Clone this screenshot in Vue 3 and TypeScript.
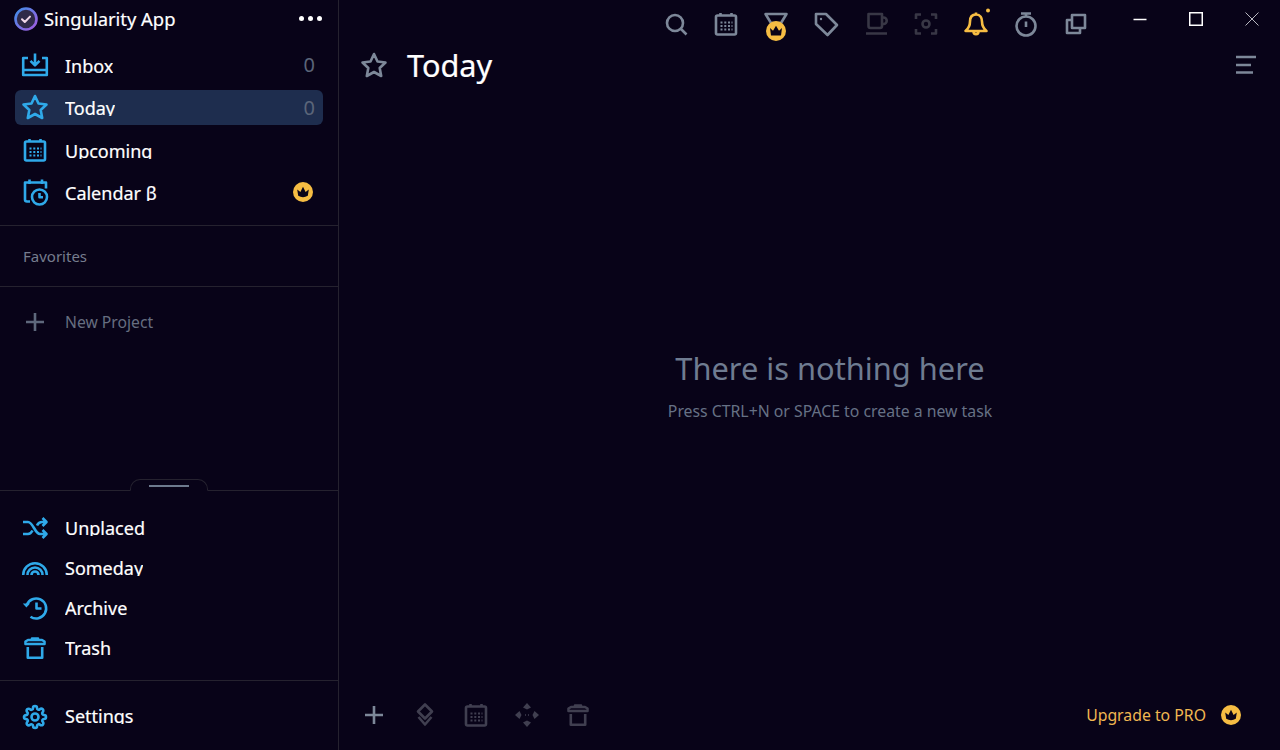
<template>
  <div class="app">
    <aside class="sidebar">
      <header class="brand">
        <svg class="logo" viewBox="0 0 24 24">
          <defs>
            <linearGradient id="ring" x1="0" y1="0" x2="1" y2="1">
              <stop offset="0" stop-color="#3f8ee8" />
              <stop offset="1" stop-color="#a45be0" />
            </linearGradient>
          </defs>
          <circle cx="12" cy="12" r="10.500" fill="#2f2a48" stroke="url(#ring)" stroke-width="2.600" />
          <path d="M8 12.200l2.800 2.800L16 9.600" fill="none" stroke="#f0d8e8" stroke-width="2" stroke-linecap="round" stroke-linejoin="round" />
        </svg>
        <span class="brand-name">Singularity App</span>
        <span class="dots"><i></i><i></i><i></i></span>
      </header>

      <nav class="nav main-nav">
        <a v-for="item in mainNav" :key="item.label" class="nav-row" :class="{ active: item.active }">
          <svg class="ic blue" viewBox="0 0 26 26" v-html="item.icon"></svg>
          <span class="label">{{ item.label }}</span>
          <span v-if="item.count !== undefined" class="count">{{ item.count }}</span>
          <svg v-if="item.pro" class="crown" viewBox="0 0 20 20" v-html="crown"></svg>
        </a>
      </nav>

      <div class="favorites">Favorites</div>

      <div class="new-project">
        <svg class="ic plus" viewBox="0 0 26 26" v-html="icons.plus"></svg>
        <span>New Project</span>
      </div>

      <div class="spacer"></div>

      <div class="handle-line">
        <div class="handle"><i></i></div>
      </div>

      <nav class="nav lower-nav">
        <a v-for="item in lowerNav" :key="item.label" class="nav-row low">
          <svg class="ic blue" viewBox="0 0 26 26" v-html="item.icon"></svg>
          <span class="label">{{ item.label }}</span>
        </a>
      </nav>

      <div class="settings">
        <a class="nav-row low-label">
          <svg class="ic blue" viewBox="-1 -1 26 26" v-html="icons.gear"></svg>
          <span class="label">Settings</span>
        </a>
      </div>
    </aside>

    <main class="content">
      <div class="topbar">
        <div class="tools">
          <span v-for="tool in tools" :key="tool.name" class="tool" :class="tool.tone">
            <svg class="ic" viewBox="0 0 26 26" v-html="tool.icon"></svg>
          </span>
        </div>
        <div class="window-controls">
          <span class="win"><svg viewBox="0 0 16 16"><path d="M1.500 8.500H14.500" /></svg></span>
          <span class="win"><svg viewBox="0 0 16 16"><path d="M1.750 1.750H14.250V14.250H1.750Z" /></svg></span>
          <span class="win close"><svg viewBox="0 0 16 16"><path d="M1.500 1.500L14.500 14.500M14.500 1.500L1.500 14.500" /></svg></span>
        </div>
      </div>

      <div class="title-row">
        <svg class="ic title-star" viewBox="0 0 26 26" v-html="icons.star"></svg>
        <h1>Today</h1>
        <svg class="ic menu" viewBox="0 0 26 26" v-html="icons.menu"></svg>
      </div>

      <div class="empty">
        <div class="empty-title">There is nothing here</div>
        <div class="empty-sub">Press CTRL+N or SPACE to create a new task</div>
      </div>

      <footer class="bottom">
        <span class="bottom-tool add"><svg class="ic" viewBox="0 0 26 26" v-html="icons.plus"></svg></span>
        <span v-for="b in bottomTools" :key="b" class="bottom-tool"><svg class="ic" viewBox="0 0 26 26" v-html="b"></svg></span>
        <div class="upgrade">
          <span>Upgrade to PRO</span>
          <svg class="crown" viewBox="0 0 20 20" v-html="crown"></svg>
        </div>
      </footer>
    </main>
  </div>
</template>

<script setup lang="ts">
interface NavItem {
  label: string
  icon: string
  count?: number
  active?: boolean
  pro?: boolean
}

const p = (d: string, extra = ''): string => `<path d="${d}" ${extra}/>`
const dotted = 'stroke-width="2"'

const grid =
  'M7.500 11.500h2M11.300 11.500h2M15 11.500h2M18.500 11.500h1M7.500 15h2M11.300 15h2M15 15h2M18.500 15h1M7.500 18.500h2M11.300 18.500h2M15 18.500h2M18.500 18.500h1'

const icons = {
  inbox: p('M6 6H1.200V23H24.800V6H20M1.200 18H24.800M13 1.500V13M8.500 8.800L13 13.300L17.500 8.800'),
  star: p('M13 2L16.500 9.500L24.500 10.500L18.700 16L20.200 24L13 20L5.800 24L7.300 16L1.500 10.500L9.500 9.500Z'),
  calendar: p('M4.500 4.500H21.500Q23 4.500 23 6V22Q23 23.500 21.500 23.500H4.500Q3 23.500 3 22V6Q3 4.500 4.500 4.500ZM7.500 2V5M18.500 2V5') + p(grid, dotted),
  calClock:
    p('M8 22.500H5Q3 22.500 3 20.500V3.500H24V9.500M7.500 0.500V5M20 0.500V5') +
    p('M25 18a7.500 7.500 0 1 1-15 0a7.500 7.500 0 1 1 15 0M17.500 14v4.200h3.500'),
  shuffle: p('M1 7H6C11 7 13 19 18 19H24M1 19H6C8 19 9.500 17.500 10.500 15.500M15 10.500C16 8.500 17.500 7 20 7H24M20.500 3L24.500 7L20.500 11M20.500 15L24.500 19L20.500 23'),
  rainbow: p('M1.200 20a11.800 11.800 0 0 1 23.600 0M5.500 20a7.500 7.500 0 0 1 15 0M9.500 20a3.500 3.500 0 0 1 7 0'),
  history: p('M4.800 10A10 10 0 1 1 8.500 21.700M14.500 7.500V13.500H19.500') + '<path d="M0.800 8.500H8L4.400 12.500Z" fill="currentColor" stroke="none"/>',
  trash: p('M3.500 9H22.500V6.500L20 5H6L3.500 6.500ZM10 5V3.500H16V5M5.800 12V22.800H20.200V12'),
  gear:
    p('M19.400 15a1.650 1.650 0 0 0 .33 1.820l.06.06a2 2 0 0 1 0 2.830 2 2 0 0 1-2.830 0l-.06-.06a1.650 1.650 0 0 0-1.820-.33 1.650 1.650 0 0 0-1 1.510V21a2 2 0 0 1-2 2 2 2 0 0 1-2-2v-.09A1.650 1.650 0 0 0 9 19.400a1.650 1.650 0 0 0-1.820.33l-.06.06a2 2 0 0 1-2.830 0 2 2 0 0 1 0-2.830l.06-.06a1.650 1.650 0 0 0 .33-1.820 1.650 1.650 0 0 0-1.510-1H3a2 2 0 0 1-2-2 2 2 0 0 1 2-2h.09A1.650 1.650 0 0 0 4.600 9a1.650 1.650 0 0 0-.33-1.820l-.06-.06a2 2 0 0 1 0-2.830 2 2 0 0 1 2.830 0l.06.06a1.650 1.650 0 0 0 1.820.33H9a1.650 1.650 0 0 0 1-1.510V3a2 2 0 0 1 2-2 2 2 0 0 1 2 2v.09a1.650 1.650 0 0 0 1 1.510 1.650 1.650 0 0 0 1.820-.33l.06-.06a2 2 0 0 1 2.830 0 2 2 0 0 1 0 2.830l-.06.06a1.650 1.650 0 0 0-.33 1.820V9a1.650 1.650 0 0 0 1.510 1H21a2 2 0 0 1 2 2 2 2 0 0 1-2 2h-.09a1.650 1.650 0 0 0-1.510 1z') +
    '<circle cx="12" cy="12" r="3.500"/>',
  plus: p('M13 4V22M4 13H22'),
  menu: p('M3 5H23M3 13H18M3 20.500H20'),
  search: p('M20 12a8 8 0 1 1-16 0a8 8 0 1 1 16 0M18 18L23.500 23.500'),
  medal:
    p('M2.500 3H23.500L18 12H8Z') +
    '<circle cx="13" cy="20" r="10" fill="#f6bd43" stroke="none"/>' +
    '<path d="M7 17L10 19.800L13 14.800L16 19.800L19 17L18 24.500H8Z" fill="#0a0418" stroke="none"/>',
  tag: p('M3 3H13L24 14L14.500 24L3 13Z') + '<circle cx="8" cy="8" r="1.200" fill="currentColor" stroke="none"/>',
  coffee: p('M5.500 3H19V15Q19 17 17 17H7.500Q5.500 17 5.500 15ZM19 6.500h1.500a3 3 0 0 1 0 6.500H19M3 22.500H24'),
  focus: p('M3 8V3.500H8M18 3.500H23V8M23 18V22.500H18M8 22.500H3V18M16.500 13a3.500 3.500 0 1 1-7 0a3.500 3.500 0 1 1 7 0'),
  bell:
    p('M13 3.500C8.500 3.500 7 7 7 10.500C7 15 5.500 17.500 2.500 20H23.500C20.500 17.500 19 15 19 10.500C19 7 17.500 3.500 13 3.500ZM13 1.500V3.500M10.500 20.500C10.500 24 15.500 24 15.500 20.500') +
    '<circle cx="25" cy="-0.500" r="2" fill="#f6bd43" stroke="none"/>',
  timer: p('M22.500 15a9.500 9.500 0 1 1-19 0a9.500 9.500 0 1 1 19 0M8 2.500H18M13 2.500V5.500M13 10.500V16'),
  copy: p('M9 4H22V17H9ZM9 9H4V22H17V17'),
  layers: p('M13 2.500L20 9.500L13 16.500L6 9.500ZM6.500 15L13 22.500L19.500 15'),
  move:
    '<path d="M13 1L17 5.500L13 7.500L9 5.500ZM13 25L17 20.500L13 18.500L9 20.500ZM1 13L5.500 9L7.500 13L5.500 17ZM25 13L20.500 9L18.500 13L20.500 17Z" fill="currentColor" stroke="none"/>' +
    '<path d="M11 13h1M14 13h1" stroke-width="1.500"/>'
}

const crown =
  '<circle cx="10" cy="10" r="10" fill="#f6bd43"/><path d="M4.200 7.500L7.400 10L10 4.800L12.600 10L15.800 7.500L14.800 13.800Q10 16.500 5.200 13.800Z" fill="#0a0418"/>'

const mainNav: NavItem[] = [
  { label: 'Inbox', icon: icons.inbox, count: 0 },
  { label: 'Today', icon: icons.star, count: 0, active: true },
  { label: 'Upcoming', icon: icons.calendar },
  { label: 'Calendar β', icon: icons.calClock, pro: true }
]

const lowerNav: NavItem[] = [
  { label: 'Unplaced', icon: icons.shuffle },
  { label: 'Someday', icon: icons.rainbow },
  { label: 'Archive', icon: icons.history },
  { label: 'Trash', icon: icons.trash }
]

const tools = [
  { name: 'search', icon: icons.search, tone: '' },
  { name: 'calendar', icon: icons.calendar, tone: '' },
  { name: 'medal', icon: icons.medal, tone: '' },
  { name: 'tag', icon: icons.tag, tone: '' },
  { name: 'coffee', icon: icons.coffee, tone: 'dim' },
  { name: 'focus', icon: icons.focus, tone: 'dim' },
  { name: 'bell', icon: icons.bell, tone: 'gold' },
  { name: 'timer', icon: icons.timer, tone: '' },
  { name: 'copy', icon: icons.copy, tone: '' }
]

const bottomTools = [icons.layers, icons.calendar, icons.move, icons.trash]
</script>

<style scoped>
.app {
  display: flex;
  width: 1280px;
  height: 750px;
  overflow: hidden;
  background: #080318;
  color: #fff;
  font-family: 'Noto Sans', 'Open Sans', sans-serif;
}

.sidebar {
  display: flex;
  flex-direction: column;
  flex: 0 0 339px;
  border-right: 1px solid #25222f;
  box-sizing: border-box;
}

.brand {
  display: flex;
  align-items: center;
  height: 37px;
  padding: 0 15px 0 14px;
}

.logo {
  width: 24px;
  height: 24px;
  margin-right: 6px;
}

.brand-name {
  font-size: 18.400px;
  -webkit-text-stroke: 0.2px #fff;
}

.dots {
  display: flex;
  gap: 4px;
  margin-left: auto;
  margin-right: 1px;
}

.dots i {
  width: 5px;
  height: 5px;
  border-radius: 50%;
  background: #fff;
}

.nav {
  display: flex;
  flex-direction: column;
}

.main-nav {
  padding: 10px 15px 15px;
  gap: 7.500px;
  border-bottom: 1px solid #25222f;
}

.nav-row {
  display: flex;
  align-items: center;
  height: 35px;
  padding: 0 8px 0 7px;
  border-radius: 6px;
}

.nav-row.active {
  background: #1e2d4e;
}

.nav-row.low {
  height: 40px;
}

.ic {
  flex: none;
  width: 26px;
  height: 26px;
  overflow: visible;
  fill: none;
  stroke: currentColor;
  stroke-width: 2.600;
  stroke-linejoin: round;
}

.blue {
  color: #2fa9e9;
}

.label {
  height: 20px;
  margin-bottom: 2px;
  margin-left: 17px;
  overflow: hidden;
  font-size: 18px;
  line-height: 24px;
  white-space: nowrap;
  -webkit-text-stroke: 0.2px #fff;
}

.low .label,
.low-label .label {
  margin-bottom: 5px;
}

.count {
  margin-left: auto;
  color: #5b6579;
  font-size: 20px;
}

.crown {
  flex: none;
  width: 20px;
  height: 20px;
  margin-left: auto;
  margin-right: 2px;
}

.favorites {
  height: 60px;
  padding-left: 23px;
  border-bottom: 1px solid #25222f;
  color: #767d8e;
  font-size: 15px;
  line-height: 60px;
}

.new-project {
  display: flex;
  align-items: center;
  gap: 17px;
  height: 70px;
  padding-left: 22px;
  color: #666e80;
  font-size: 15.700px;
}

.plus {
  color: #5e687c;
}

.spacer {
  flex: 1;
}

.handle-line {
  position: relative;
  border-bottom: 1px solid #25222f;
}

.handle {
  position: absolute;
  left: 130px;
  bottom: -1px;
  display: flex;
  justify-content: center;
  width: 78px;
  height: 12px;
  box-sizing: border-box;
  border: 1px solid #25222f;
  border-bottom: 1px solid #080318;
  border-radius: 10px 10px 0 0;
  background: #080318;
}

.handle i {
  width: 40px;
  height: 2px;
  margin-top: 5px;
  background: #6d7a8e;
}

.lower-nav {
  padding: 17px 15px 12px;
  border-bottom: 1px solid #25222f;
}

.settings {
  padding: 18px 15px 16px;
}

.content {
  display: flex;
  flex-direction: column;
  flex: 1;
  min-width: 0;
}

.topbar {
  display: flex;
  justify-content: flex-end;
  height: 44px;
}

.tools {
  display: flex;
  align-items: center;
  height: 48px;
  margin-right: 11px;
}

.tool {
  display: flex;
  justify-content: center;
  width: 50px;
  color: #7d8899;
}

.tool.dim {
  color: #383745;
}

.tool.gold {
  color: #f6bd43;
}

.window-controls {
  display: flex;
  height: 37px;
}

.win {
  display: flex;
  align-items: center;
  justify-content: center;
  width: 56px;
}

.win svg {
  width: 16px;
  height: 16px;
  fill: none;
  stroke: #fff;
  stroke-width: 1.500;
}

.win.close svg {
  stroke: #b8b8c0;
  stroke-width: 1;
}

.title-row {
  display: flex;
  align-items: center;
  height: 42px;
  padding: 0 21px 0 22px;
}

.title-star {
  color: #7d8899;
}

.title-row h1 {
  margin: 0 0 0 20px;
  font-size: 30.700px;
  font-weight: 400;
  -webkit-text-stroke: 0.2px #fff;
}

.menu {
  margin-left: auto;
  color: #7d8899;
}

.empty {
  display: flex;
  flex: 1;
  flex-direction: column;
  align-items: center;
  padding-top: 261px;
  padding-left: 41px;
}

.empty-title {
  color: #6f7c91;
  font-size: 30.800px;
}

.empty-sub {
  margin-top: 11px;
  color: #667185;
  font-size: 15.800px;
}

.bottom {
  display: flex;
  align-items: center;
  height: 70px;
  padding: 0 39px 0 22px;
}

.bottom-tool {
  display: flex;
  justify-content: center;
  width: 26px;
  margin-right: 25px;
  color: #403f50;
}

.bottom-tool.add {
  color: #7d8899;
}

.upgrade {
  display: flex;
  align-items: center;
  gap: 15px;
  margin-left: auto;
  color: #f0b751;
  font-size: 15.800px;
}

.upgrade .crown {
  margin: 0;
}
</style>

<style>
html,
body {
  margin: 0;
  background: #080318;
}
</style>
